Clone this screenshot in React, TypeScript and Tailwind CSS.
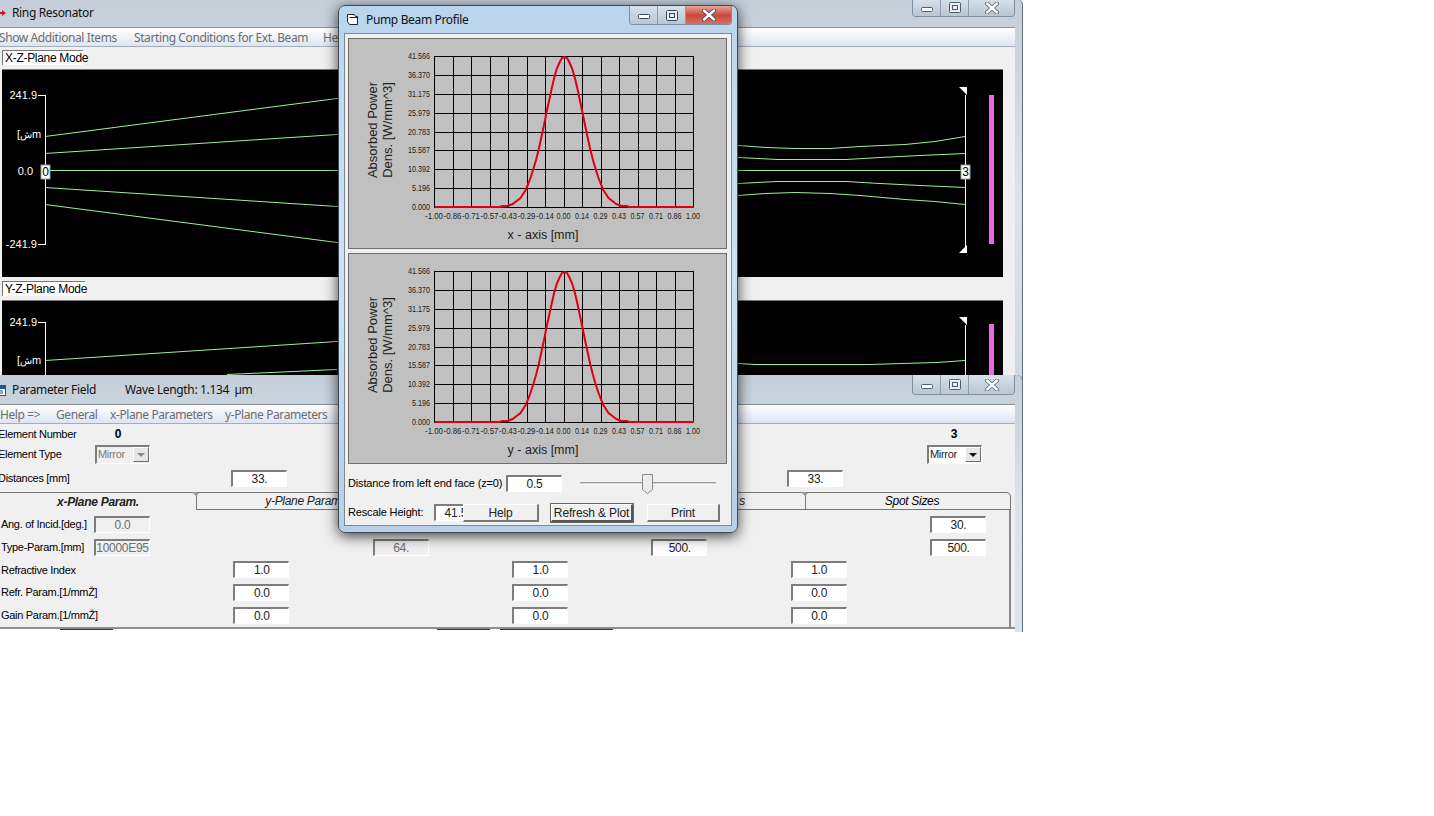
import React from "react";

const sysFont = "font-['Noto_Sans',sans-serif]";

const xTicks = ["-1.00", "-0.86", "-0.71", "-0.57", "-0.43", "-0.29", "-0.14", "0.00", "0.14", "0.29", "0.43", "0.57", "0.71", "0.86", "1.00"];
const yTicks = ["41.566", "36.370", "31.175", "25.979", "20.783", "15.587", "10.392", "5.196", "0.000"];

// gaussian pump profile, x in mm
function profilePoints() {
  const pts: string[] = [];
  for (let i = 0; i <= 100; i++) {
    const x = -1 + i * 0.02;
    const v = Math.exp((-x * x) / 0.0417);
    pts.push(`${(86 + ((x + 1) / 2) * 259).toFixed(1)},${Math.round(169 - v * 150)}`);
  }
  return pts.join(" ");
}

function BeamChart({ axis }: { axis: string }) {
  return (
    <div className="h-[211px] w-[379px] border border-[#6f6f6f] bg-[#c0c0c0]">
      <svg width="377" height="209" className="block tracking-normal">
        <g stroke="#000" strokeWidth="1" shapeRendering="crispEdges">
          {xTicks.map((_, i) => {
            const x = Math.round(85 + i * 18.5);
            return <line key={i} x1={x} x2={x} y1="17" y2="168" />;
          })}
          {yTicks.map((_, i) => {
            const y = Math.round(17 + i * 18.875);
            return <line key={i} x1="85" x2="344" y1={y} y2={y} />;
          })}
        </g>
        <polyline points={profilePoints()} fill="none" stroke="#e00010" strokeWidth="2" transform="translate(0 -1)" />
        {yTicks.map((t, i) => (
          <text key={t} x="81" y={20 + i * 18.875} textAnchor="end" fontSize="9" textLength={t.length > 5 ? 22 : 18} lengthAdjust="spacingAndGlyphs" fill="#222">
            {t}
          </text>
        ))}
        {xTicks.map((t, i) => (
          <text key={t} x={85 + i * 18.5} y="180" textAnchor="middle" fontSize="9" textLength={t.startsWith("-") ? 18 : 14} lengthAdjust="spacingAndGlyphs" fill="#222">
            {t}
          </text>
        ))}
        <text x="194" y="200" textAnchor="middle" fontSize="12.5" fill="#222">
          {axis} - axis [mm]
        </text>
        <g transform="translate(28 91) rotate(-90)" fontSize="13" fill="#222" textAnchor="middle">
          <text x="0" y="0">Absorbed Power</text>
          <text x="0" y="15">Dens. [W/mm^3]</text>
        </g>
      </svg>
    </div>
  );
}

function TitleButtons({ active, height }: { active?: boolean; height: string }) {
  const stroke = active ? "#33485c" : "#4f5f6c";
  return (
    <div className={`ml-auto flex self-start overflow-hidden rounded-b-[4px] border border-t-0 border-[#7f8f9d] ${height}`}>
      <div className="flex w-[28px] items-center justify-center border-r border-[#8d9dab] bg-linear-to-b from-[#d7e2ec] to-[#b7c6d3]">
        <svg width="12" height="8" viewBox="0 0 12 8">
          <rect x="0.5" y="3.5" width="11" height="4" rx="1" fill="#fff" stroke={stroke} />
        </svg>
      </div>
      <div className="flex w-[28px] items-center justify-center border-r border-[#8d9dab] bg-linear-to-b from-[#d7e2ec] to-[#b7c6d3]">
        <svg width="12" height="11" viewBox="0 0 12 11">
          <rect x="0.5" y="0.5" width="11" height="10" rx="1" fill="#e8eef3" stroke={stroke} />
          <rect x="3.5" y="3.5" width="5" height="4" fill="none" stroke={stroke} />
        </svg>
      </div>
      <div className={`flex w-[45px] items-center justify-center ${active ? "bg-linear-to-b from-[#e8a49a] via-[#c8493a] to-[#d8705f]" : "bg-linear-to-b from-[#d7e2ec] to-[#b7c6d3]"}`}>
        <svg width="16" height="12" viewBox="0 0 16 12">
          <path d="M3 1.5 13 10.5M13 1.5 3 10.5" stroke={stroke} strokeWidth="4" strokeLinecap="round" />
          <path d="M3 1.5 13 10.5M13 1.5 3 10.5" stroke="#fff" strokeWidth="2.4" strokeLinecap="round" />
        </svg>
      </div>
    </div>
  );
}

function Menu({ items }: { items: { label: string; width: string }[] }) {
  return (
    <div className={`flex h-[19px] shrink-0 items-center overflow-hidden border-b border-[#a5adb6] bg-linear-to-b from-white to-[#dde4f3] pt-[2px] text-[12px] tracking-[-0.4px] text-[#6d6d6d] ${sysFont}`}>
      {items.map((m) => (
        <span key={m.label} className={`shrink-0 ${m.width}`}>
          {m.label}
        </span>
      ))}
    </div>
  );
}

function Input({ value, disabled, className = "" }: { value: string; disabled?: boolean; className?: string }) {
  return (
    <div
      className={`flex h-[17px] w-[56px] shrink-0 items-center justify-center overflow-hidden border-t-2 border-l-2 border-r border-b border-t-[#7d7d7d] border-l-[#7d7d7d] border-r-white border-b-white text-[12px] ${disabled ? "bg-[#f0f0f0] text-[#6d6d6d]" : "bg-white text-[#222]"} ${className}`}
    >
      {value}
    </div>
  );
}

function Combo({ disabled, className = "" }: { disabled?: boolean; className?: string }) {
  return (
    <div className={`flex h-[19px] w-[55px] shrink-0 items-center border-t-2 border-l-2 border-r border-b border-t-[#7d7d7d] border-l-[#7d7d7d] border-r-white border-b-white pl-[1px] ${disabled ? "bg-[#f0f0f0] text-[#7a7a7a]" : "bg-white text-[#222]"} ${className}`}>
      Mirror
      <span className="ml-auto flex h-[15px] w-[16px] items-center justify-center border border-t-white border-l-white border-r-[#6d6d6d] border-b-[#6d6d6d] bg-[#e6e6e6]">
        <svg width="8" height="4" viewBox="0 0 8 4">
          <path d="M0 0h8L4 4z" fill={disabled ? "#8a8a8a" : "#111"} />
        </svg>
      </span>
    </div>
  );
}

function PushButton({ label, className = "", strong }: { label: string; className?: string; strong?: boolean }) {
  return (
    <div
      className={`relative flex h-[18px] shrink-0 items-center justify-center border-t border-l border-t-white border-l-white border-r-2 border-b-2 text-[12px] text-[#222] bg-[#f0f0f0] ${strong ? "border-r-[#555] border-b-[#555] outline outline-[#666]" : "border-r-[#777] border-b-[#777]"} ${className}`}
    >
      {label}
    </div>
  );
}

function Tab({ label, className = "", labelClass = "" }: { label: string; className?: string; labelClass?: string }) {
  return (
    <div className={`relative flex h-[18px] shrink-0 items-center justify-center border-t border-r border-[#777] text-[12px] italic text-[#222] ${className}`}>
      <span className={labelClass}>{label}</span>
      <span className="absolute -right-[4px] -top-px h-0 w-0 border-x-4 border-t-4 border-x-transparent border-t-[#999]" />
    </div>
  );
}

function TraceCanvas({ height, children }: { height: string; children: React.ReactNode }) {
  return (
    <div className={`ml-[2px] w-[1001px] shrink-0 overflow-hidden border-t border-[#777] bg-black tracking-normal ${height}`}>
      <svg width="1001" height="208" className="block">
        {children}
      </svg>
    </div>
  );
}

const trace = "#a0ee98";

function ElementBox({ x, y, label }: { x: number; y: number; label: string }) {
  return (
    <g>
      <rect x={x} y={y} width="9" height="14" fill="#fff" stroke="#999" />
      <text x={x + 4.5} y={y + 11} textAnchor="middle" fontSize="12" fill="#000">
        {label}
      </text>
    </g>
  );
}

function Labels({ top, unit, zero, bottom }: { top: number; unit: number; zero?: number; bottom?: number }) {
  return (
    <g fontSize="11" fill="#fff">
      <text x="35" y={top} textAnchor="end">241.9</text>
      <text x="15" y={unit}>[<tspan fontSize="10">ش</tspan>m</text>
      {zero !== undefined && <text x="31" y={zero} textAnchor="end">0.0</text>}
      {bottom !== undefined && <text x="35" y={bottom} textAnchor="end">-241.9</text>}
    </g>
  );
}

export default function App() {
  return (
    <div className="relative h-[816px] w-[1434px] overflow-hidden whitespace-nowrap bg-white text-[11px] font-['Liberation_Sans',sans-serif] tracking-[-0.3px]">
      {/* main resonator window */}
      <div className="absolute -left-[8px] -top-px z-0 flex h-[400px] w-[1031px] flex-col rounded-t-[6px] border-r border-[#66737f] bg-linear-to-b from-[#c3ced9] via-[#dbe4ec] to-[#c9d9e8] pl-[8px] pr-[7px]">
        <div className={`flex h-[28px] shrink-0 items-center text-[12px] tracking-[-0.35px] text-[#111] ${sysFont}`}>
          <svg width="12" height="12" viewBox="0 0 12 12" className="-ml-[6px] shrink-0">
            <path d="M1 6h9" stroke="#d01020" strokeWidth="2" />
            <path d="M6 6 3 3v6z" fill="#d01020" />
            <path d="M12 6 8 3v6z" fill="#d01020" />
          </svg>
          <span className="ml-[6px]">Ring Resonator</span>
          <TitleButtons height="h-[18px]" />
        </div>
        <div className="flex flex-1 flex-col border-t border-[#8a8f94] bg-[#f0f0f0]">
          <Menu
            items={[
              { label: "Show Additional Items", width: "-ml-[1px] w-[135px]" },
              { label: "Starting Conditions for Ext. Beam", width: "w-[189px]" },
              { label: "Help", width: "w-[40px]" },
            ]}
          />
          <div className="mb-[4px] ml-[2px] mt-[3px] flex h-[15px] w-[81px] shrink-0 items-center border-t border-l border-t-[#777] border-l-[#777] bg-white pl-[2px] text-[12px]">
            X-Z-Plane Mode
          </div>
          <TraceCanvas height="h-[208px]">
            <g fill="none" stroke={trace} strokeWidth="1">
              <polyline points="43,66.5 335,28.5 500,30 736,75.5 764,77.5 793,78.5 828,78.5 858,76.5 903,74.5 933,71.5 963,66.5" />
              <polyline points="43,83.5 335,64.5 500,66 736,87.5 776,89.5 844,89.5 878,87.5 918,85.5 963,83.5" />
              <polyline points="43,100.5 963,100.5" />
              <polyline points="43,117.5 335,136.5 500,134 736,113.5 775,111.5 844,111.5 878,113.5 918,115.5 963,117.5" />
              <polyline points="43,134.5 335,172.5 500,170 736,125.5 763,123.5 793,122.5 828,123.5 858,125.5 903,129.5 933,131.5 963,134.5" />
            </g>
            <g fill="none" stroke="#fff" strokeWidth="1" shapeRendering="crispEdges">
              <path d="M36 25.5h7.5V174.5H36" />
              <path d="M963.5 25V180" />
            </g>
            <path d="M957 17h8v8z M957 183h8v-8z" fill="#fff" />
            <rect x="987" y="25" width="5" height="149" fill="#ee66e8" />
            <Labels top={29} unit={68} zero={105} bottom={178} />
            <ElementBox x={39} y={95} label="0" />
            <ElementBox x={959} y={95} label="3" />
          </TraceCanvas>
          <div className="mb-[4px] ml-[2px] mt-[4px] flex h-[15px] w-[83px] shrink-0 items-center border-t border-l border-t-[#777] border-l-[#777] bg-white pl-[2px] text-[12px]">
            Y-Z-Plane Mode
          </div>
          <TraceCanvas height="h-[120px]">
            <g fill="none" stroke={trace} strokeWidth="1">
              <polyline points="43,59.5 335,40.5 500,41 736,62.5 753,63.5 868,63.5 900,62.5 935,61.5 963,59.5" />
              <polyline points="225,73.5 335,68.5" />
            </g>
            <g fill="none" stroke="#fff" strokeWidth="1" shapeRendering="crispEdges">
              <path d="M36 21.5h7.5V120" />
              <path d="M963.5 24V120" />
            </g>
            <path d="M957 16h8v8z" fill="#fff" />
            <rect x="987" y="23" width="5" height="100" fill="#ee66e8" />
            <Labels top={25} unit={63} />
          </TraceCanvas>
        </div>
      </div>

      {/* parameter window */}
      <div className="absolute -left-[8px] top-[375px] z-10 flex h-[257px] w-[1031px] flex-col rounded-t-[6px] border-r border-[#66737f] bg-linear-to-b from-[#c3ced9] via-[#dbe4ec] to-[#d7e3ee] pl-[8px] pr-[7px]">
        <div className={`flex h-[29px] shrink-0 items-center text-[12px] tracking-[-0.35px] text-[#111] ${sysFont}`}>
          <svg width="12" height="12" viewBox="0 0 12 12" className="-ml-[6px] shrink-0">
            <rect x="0.5" y="1.5" width="11" height="10" fill="#fff" stroke="#1f4fa0" />
            <rect x="1" y="2" width="10" height="3" fill="#1f4fa0" />
            <path d="M3 7h6M3 9h6" stroke="#1f4fa0" />
          </svg>
          <span className="ml-[6px] w-[113px]">Parameter Field</span>
          <span>Wave Length: 1.134&nbsp; µm</span>
          <TitleButtons height="h-[20px]" />
        </div>
        <div className="flex h-[225px] shrink-0 flex-col overflow-hidden border-t border-b-2 border-[#8a8f94] bg-[#f0f0f0]">
          <Menu
            items={[
              { label: "Help =>", width: "w-[56px]" },
              { label: "General", width: "w-[54px]" },
              { label: "x-Plane Parameters", width: "w-[115px]" },
              { label: "y-Plane Parameters", width: "w-[110px]" },
            ]}
          />
          <div className="-ml-[2px] flex h-[20px] shrink-0 items-center">
            <span className="w-[115px]">Element Number</span>
            <span className="w-[10px] text-center text-[12px] font-bold">0</span>
            <span className="ml-[826px] w-[10px] text-center text-[12px] font-bold">3</span>
          </div>
          <div className="-ml-[2px] flex h-[20px] shrink-0 items-center">
            <span className="w-[97px]">Element Type</span>
            <Combo disabled />
            <Combo className="ml-[777px]" />
          </div>
          <div className="-ml-[2px] mt-[6px] flex shrink-0 items-center">
            <span className="w-[233px]">Distances [mm]</span>
            <Input value="33." />
            <Input value="33." className="ml-[500px]" />
          </div>
          <div className="-ml-[8px] mt-[5px] flex shrink-0 overflow-visible">
            <Tab label="x-Plane Param." className="w-[205px] rounded-tl-[4px] font-bold" labelClass="pl-[8px]" />
            <Tab label="y-Plane Param." className="w-[202px] border-b" labelClass="pl-[14px]" />
            <Tab label="" className="w-[202px] border-b" />
            <Tab label="s" className="w-[205px] justify-end border-b" labelClass="pr-[60px]" />
            <div className="relative flex h-[18px] w-[205px] shrink-0 items-center justify-center rounded-tr-[5px] border-t border-r border-b border-[#777] pl-[8px] text-[12px] italic">
              Spot Sizes
            </div>
          </div>
          <div className="mr-[4px] grid flex-1 grid-cols-[94px_repeat(7,139.33px)] auto-rows-[22.75px] content-start items-center border-r-2 border-[#8a8a8a] pt-[3px]">
            <span className="pl-[1px]">Ang. of Incid.[deg.]</span>
            <Input value="0.0" disabled />
            <Input value="30." className="col-start-8" />

            <span className="col-start-1 pl-[1px]">Type-Param.[mm]</span>
            <Input value="10000E95" disabled />
            <Input value="64." disabled className="col-start-4" />
            <Input value="500." className="col-start-6" />
            <Input value="500." className="col-start-8" />

            <span className="col-start-1 pl-[1px]">Refractive Index</span>
            <Input value="1.0" className="col-start-3" />
            <Input value="1.0" className="col-start-5" />
            <Input value="1.0" className="col-start-7" />

            <span className="col-start-1 pl-[1px]">Refr. Param.[1/mmŽ]</span>
            <Input value="0.0" className="col-start-3" />
            <Input value="0.0" className="col-start-5" />
            <Input value="0.0" className="col-start-7" />

            <span className="col-start-1 pl-[1px]">Gain Param.[1/mmŽ]</span>
            <Input value="0.0" className="col-start-3" />
            <Input value="0.0" className="col-start-5" />
            <Input value="0.0" className="col-start-7" />
          </div>
        </div>
        {/* tops of the next row of fields, cut off by the window edge */}
        <div className="flex h-[3px] shrink-0 items-start bg-white">
          <span className="ml-[60px] h-px w-[53px] bg-[#333]" />
          <span className="ml-[324px] h-px w-[53px] bg-[#333]" />
          <span className="ml-[10px] h-px w-[113px] bg-[#333]" />
        </div>
      </div>

      {/* pump beam profile dialog */}
      <div className="absolute left-[338px] top-[5px] z-20 flex h-[528px] w-[400px] flex-col rounded-[7px] border border-[#3f4a55] bg-linear-to-b from-[#b9d5ec] via-[#cfe2f1] to-[#b5d0e8] px-[5px] pb-[6px] shadow-[0_3px_14px_rgba(0,0,0,0.75)]">
        <div className={`flex h-[27px] shrink-0 items-center text-[12px] tracking-[-0.35px] text-[#111] ${sysFont}`}>
          <svg width="13" height="13" viewBox="0 0 13 13" className="ml-[2px] shrink-0">
            <path d="M1.5 1.5h7l1 2h2v8h-8l-2-3z" fill="#fff" stroke="#222" />
            <path d="M3.5 4.5h8" stroke="#222" />
          </svg>
          <span className="ml-[7px]">Pump Beam Profile</span>
          <TitleButtons active height="h-[19px]" />
        </div>
        <div className="flex flex-1 flex-col border border-[#7c8a96] bg-[#f0f0f0] pl-[3px] pt-[4px] tracking-[-0.15px]">
          <div className="flex flex-col gap-[4px]">
            <BeamChart axis="x" />
            <BeamChart axis="y" />
          </div>
          <div className="mt-[11px] flex h-[17px] items-center">
            <span className="w-[158px]">Distance from left end face (z=0)</span>
            <Input value="0.5" className="w-[55px]" />
            <div className="relative ml-[18px] h-[3px] w-[136px] border-t border-b border-t-[#a0a0a0] border-b-white bg-[#d0d0d0]">
              <svg width="11" height="20" viewBox="0 0 11 20" className="absolute -top-[9px] left-[62px]">
                <path d="M.5.5h10v15l-5 4-5-4z" fill="#ececec" stroke="#8a8a8a" />
              </svg>
            </div>
          </div>
          <div className="mt-[12px] flex h-[18px] items-start">
            <span className="flex h-[17px] w-[86px] items-center">Rescale Height:</span>
            <Input value="41.566" />
            <PushButton label="Help" className="-ml-[27px] w-[76px]" />
            <PushButton label="Refresh & Plot" strong className="ml-[12px] w-[82px] text-[11px]" />
            <PushButton label="Print" className="ml-[14px] w-[73px]" />
          </div>
        </div>
      </div>
    </div>
  );
}
